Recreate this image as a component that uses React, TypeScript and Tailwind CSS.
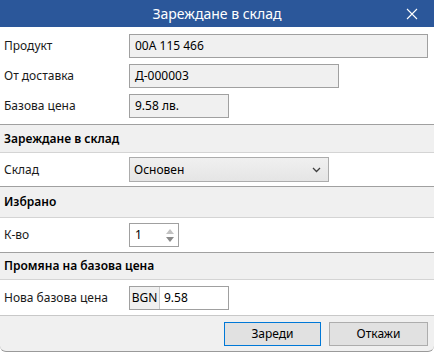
import React from "react";

const font = { fontFamily: '"Noto Sans", "Open Sans", sans-serif' };

function Label({ children }: { children: React.ReactNode }) {
  return <div className="w-[129px] shrink-0 pl-[4px] text-[12px] text-[#1a1a1a]">{children}</div>;
}

function ReadBox({ w, children }: { w: string; children: React.ReactNode }) {
  return (
    <div className={`${w} h-[24px] border border-[#a0a0a0] bg-[#f0f0f0] flex items-center pl-[5px] text-[12px] text-black`}>
      {children}
    </div>
  );
}

function Header({ children, h }: { children: React.ReactNode; h: string }) {
  return (
    <div className={`${h} shrink-0 border-t border-[#a0a0a0] border-b border-b-[#d4d4d4] bg-[#f0f0f0] flex items-center pl-[4px] text-[12px] font-semibold text-black`}>
      {children}
    </div>
  );
}

export default function App() {
  return (
    <div className="w-[434px] h-[352px] bg-white overflow-hidden flex flex-col" style={font}>
      <div className="h-[27px] shrink-0 bg-[#2b579a] relative flex items-center justify-center text-white text-[14px]">
        Зареждане в склад
        <svg className="absolute left-[406px] top-[8px]" width="12" height="12" viewBox="0 0 12 12">
          <path d="M1 1 L11 11 M11 1 L1 11" stroke="white" strokeWidth="1.1" fill="none" />
        </svg>
      </div>
      <div className="h-[4px] shrink-0" />
      <div className="h-[30px] shrink-0 flex items-center">
        <Label>Продукт</Label>
        <ReadBox w="w-[299px]">00A 115 466</ReadBox>
      </div>
      <div className="h-[30px] shrink-0 flex items-center">
        <Label>От доставка</Label>
        <ReadBox w="w-[210px]">Д-000003</ReadBox>
      </div>
      <div className="h-[30px] shrink-0 flex items-center">
        <Label>Базова цена</Label>
        <ReadBox w="w-[100px]">9.58 лв.</ReadBox>
      </div>
      <div className="h-[3px] shrink-0" />
      <Header h="h-[29px]">Зареждане в склад</Header>
      <div className="h-[33px] shrink-0 flex items-center">
        <Label>Склад</Label>
        <div className="w-[200px] h-[25px] border border-[#acacac] bg-gradient-to-b from-[#f0f0f0] to-[#e5e5e5] flex items-center justify-between pl-[4px] pr-[7px] text-[12px] text-black">
          <span>Основен</span>
          <svg width="9" height="6" viewBox="0 0 9 6">
            <path d="M1 1 L4.5 4.5 L8 1" stroke="#404040" strokeWidth="1.3" fill="none" />
          </svg>
        </div>
      </div>
      <Header h="h-[32px]">Избрано</Header>
      <div className="h-[34px] shrink-0 flex items-center">
        <Label>К-во</Label>
        <div className="w-[50px] h-[24px] border border-[#a0a0a0] bg-white flex items-center justify-between pl-[5px] pr-[4px] text-[12px] text-black">
          <span>1</span>
          <div className="flex flex-col gap-[3px]">
            <svg width="8" height="5" viewBox="0 0 8 5"><path d="M0 5 L4 0 L8 5 Z" fill="#c2c2c2" /></svg>
            <svg width="8" height="5" viewBox="0 0 8 5"><path d="M0 0 L4 5 L8 0 Z" fill="#8a8a8a" /></svg>
          </div>
        </div>
      </div>
      <Header h="h-[28px]">Промяна на базова цена</Header>
      <div className="h-[35px] shrink-0 flex items-center">
        <Label>Нова базова цена</Label>
        <div className="w-[100px] h-[24px] border border-[#a0a0a0] bg-white flex text-[12px] text-black">
          <div className="w-[30px] bg-[#f0f0f0] border-r border-[#c8c8c8] flex items-center justify-center">BGN</div>
          <div className="flex items-center pl-[4px]">9.58</div>
        </div>
      </div>
      <div className="flex-1 border-t border-[#c8c8c8] bg-[#f0f0f0] flex justify-end items-start pt-[6px] pr-[6px] gap-[8px] rounded-b-[6px] border-b border-b-[#9a9a9a]">
        <button className="w-[97px] h-[24px] border border-[#0078d7] bg-[#e1e1e1] text-[12px] text-black">Зареди</button>
        <button className="w-[99px] h-[24px] border border-[#adadad] bg-[#e1e1e1] text-[12px] text-black">Откажи</button>
      </div>
    </div>
  );
}
